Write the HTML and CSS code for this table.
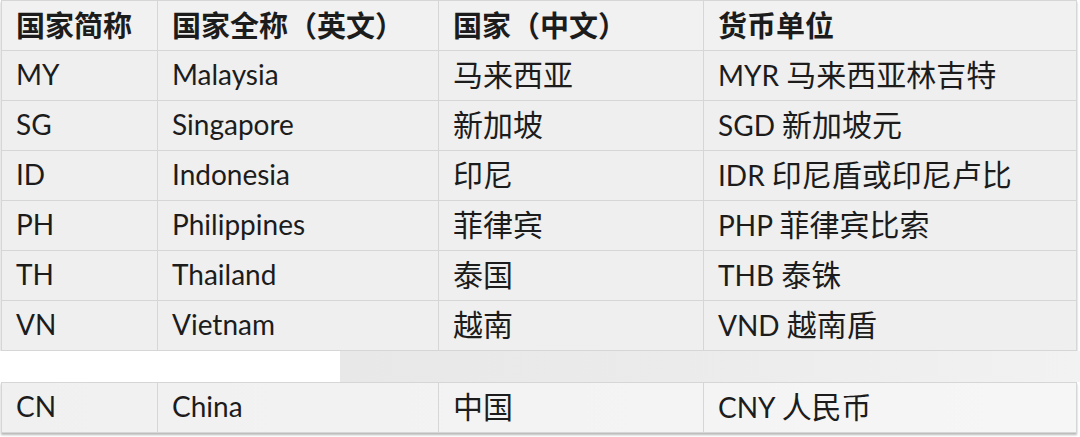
FILE: index.html
```html
<!DOCTYPE html>
<html lang="zh-CN">
<head>
<meta charset="utf-8">
<title>国家与货币</title>
<link rel="stylesheet" href="styles.css">
</head>
<body>
<div class="sheet">
  <table class="grid main">
    <colgroup>
      <col class="c1"><col class="c2"><col class="c3"><col class="c4">
    </colgroup>
    <thead>
      <tr class="head">
        <th>国家简称</th><th>国家全称（英文）</th><th>国家（中文）</th><th>货币单位</th>
      </tr>
    </thead>
    <tbody>
      <tr><td>MY</td><td>Malaysia</td><td><span class="zh">马来西亚</span></td><td>MYR <span class="zh">马来西亚林吉特</span></td></tr>
      <tr><td>SG</td><td>Singapore</td><td><span class="zh">新加坡</span></td><td>SGD <span class="zh">新加坡元</span></td></tr>
      <tr><td>ID</td><td>Indonesia</td><td><span class="zh">印尼</span></td><td>IDR <span class="zh">印尼盾或印尼卢比</span></td></tr>
      <tr><td>PH</td><td>Philippines</td><td><span class="zh">菲律宾</span></td><td>PHP <span class="zh">菲律宾比索</span></td></tr>
      <tr><td>TH</td><td>Thailand</td><td><span class="zh">泰国</span></td><td>THB <span class="zh">泰铢</span></td></tr>
      <tr><td>VN</td><td>Vietnam</td><td><span class="zh">越南</span></td><td>VND <span class="zh">越南盾</span></td></tr>
    </tbody>
  </table>
  <div class="gap"></div>
  <table class="grid solo">
    <colgroup>
      <col class="c1"><col class="c2"><col class="c3"><col class="c4">
    </colgroup>
    <tbody>
      <tr><td>CN</td><td>China</td><td><span class="zh">中国</span></td><td>CNY <span class="zh">人民币</span></td></tr>
    </tbody>
  </table>
</div>
</body>
</html>
```

FILE: styles.css
```css
html, body {
  margin: 0;
  padding: 0;
  background: #ffffff;
}

body {
  width: 1080px;
  height: 437px;
  overflow: hidden;
  font-family: "Lato", "Noto Sans CJK SC", sans-serif;
  color: #1c1c1c;
}

.sheet {
  display: flex;
  flex-direction: column;
  height: 437px;
  background: #ffffff;
}

.grid {
  border-collapse: collapse;
  table-layout: fixed;
  width: 1075px;
  margin-left: 1px;
  box-shadow: 0 2px 2px rgba(0, 0, 0, 0.28);
}

.c1 { width: 156px; }
.c2 { width: 281px; }
.c3 { width: 265px; }
.c4 { width: 373px; }

.grid th,
.grid td {
  height: 50px;
  padding: 0 0 3px 14px;
  border: 1px solid #d6d6d6;
  text-align: left;
  white-space: nowrap;
  font-size: 28px;
  line-height: 32px;
  box-sizing: border-box;
}

.grid th {
  font-family: "Noto Sans CJK SC", sans-serif;
  font-weight: 700;
  font-size: 29px;
}

.zh {
  font-family: "Noto Sans CJK SC", sans-serif;
  font-size: 30px;
}

.main {
  background: #efefef;
}

.main .head {
  background: #f1f1f1;
}

.gap {
  height: 31px;
  flex: none;
  background: linear-gradient(to right, #ffffff 0, #ffffff 340px, #e8e8e8 340px, #ebebeb 680px, #f2f2f2 1080px);
}

.solo {
  background: linear-gradient(to right, #f0f0f0, #f6f6f6);
}
```
